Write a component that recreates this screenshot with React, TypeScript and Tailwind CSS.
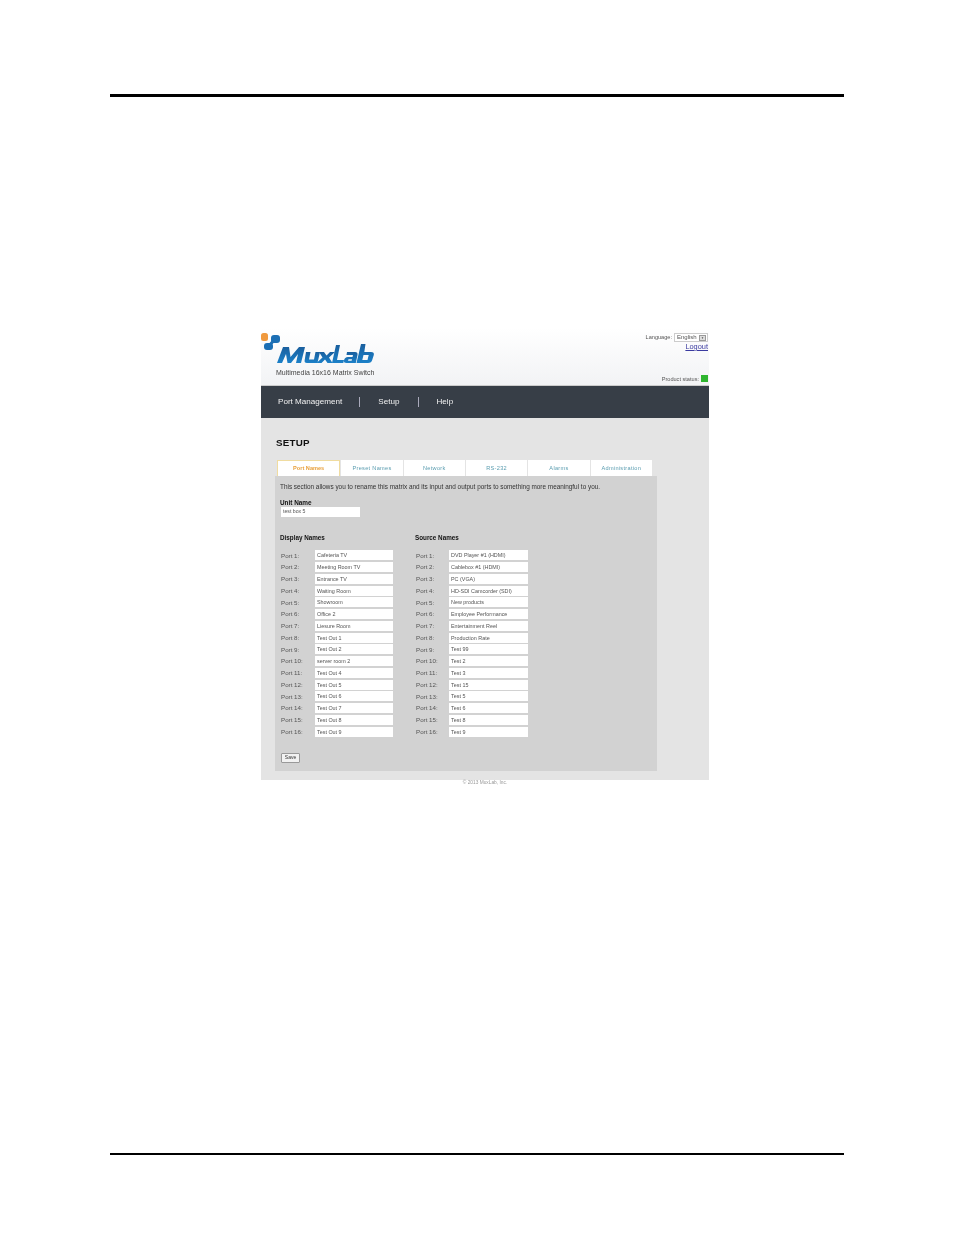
import React from 'react';

const tabs = ['Port Names', 'Preset Names', 'Network', 'RS-232', 'Alarms', 'Administration'];

const displayNames = [
    'Cafeteria TV', 'Meeting Room TV', 'Entrance TV', 'Waiting Room',
    'Showroom', 'Office 2', 'Liesure Room', 'Test Out 1',
    'Test Out 2', 'server room 2', 'Test Out 4', 'Test Out 5',
    'Test Out 6', 'Test Out 7', 'Test Out 8', 'Test Out 9',
];

const sourceNames = [
    'DVD Player #1 (HDMI)', 'Cablebox #1 (HDMI)', 'PC (VGA)', 'HD-SDI Camcorder (SDI)',
    'New products', 'Employee Performance', 'Entertainment Reel', 'Production Rate',
    'Test 99', 'Test 2', 'Test 3', 'Test 15',
    'Test 5', 'Test 6', 'Test 8', 'Test 9',
];

const Logo = () => (
    <svg width="116" height="36" viewBox="0 0 116 36" className="block">
        <defs>
            <linearGradient id="mux" x1="0" y1="0" x2="0" y2="1">
                <stop offset="0" stopColor="#1a5f9e" />
                <stop offset="1" stopColor="#1b80c8" />
            </linearGradient>
        </defs>
        <rect x="0" y="0" width="7" height="8" rx="2.5" fill="#f09a3e" />
        <rect x="3" y="10" width="9" height="7" rx="3" fill="#1c6fb4" />
        <rect x="10" y="2" width="9" height="8" rx="3" fill="#1c6fb4" />
        <path d="M8 13 L14 6" stroke="#1c6fb4" strokeWidth="3" />
        <g fill="url(#mux)">
            <path d="M16 30 L22 14 L28 14 L29.5 24 L38 14 L44 14 L40 30 L35 30 L37 21 L30 30 L26.5 30 L25 21 L21 30 Z" />
            <path d="M45 19 L49.5 19 L48 26.5 L53 26.5 L54.5 19 L59 19 L56.5 30 L46 30 Q43 30 43.7 27 Z" />
            <path d="M58 19 L63 19 L65.5 22.5 L69 19 L74 19 L68 24.5 L71.5 30 L66.5 30 L64 26.5 L60.5 30 L55.5 30 L61.5 24.5 Z" />
            <path d="M75 12 L79 12 L76 27 L83 27 L82.3 30 L71 30 Z" />
            <path fillRule="evenodd" d="M86 19 L94 19 Q97 19 96.5 22 L94.8 30 L85.5 30 Q82.5 30 83 27.5 Q83.6 24 87 24 L91.5 24 L92 22 L85.5 22 Z M87.5 26.3 L87 27.8 L90.6 27.8 L91 26.3 Z" />
            <path fillRule="evenodd" d="M100 11 L104.5 11 L103.3 19 L110 19 Q113.5 19 112.8 22 L111.2 27 Q110.5 30 107 30 L95.5 30 Z M102.5 22 L101.3 27 L106.5 27 L107.7 22 Z" />
        </g>
    </svg>
);

const PortRow = ({ label, value, labelWidth, inputWidth }: { label: string; value: string; labelWidth: string; inputWidth: string }) => (
    <div className="flex h-[11.75px] items-center">
        <span className={`${labelWidth} text-[6.2px] text-[#555]`}>{label}</span>
        <span className={`${inputWidth} flex h-[10px] items-center bg-white pl-[2px] text-[5.4px] text-[#555]`}>
            {value}
        </span>
    </div>
);

export default function App() {
    return (
        <div className="flex h-[1235px] w-[954px] flex-col bg-white pt-[94px] font-['Liberation_Sans',Arial,sans-serif]">
            <div className="mx-[110px] h-[3px] bg-black" />

            <div className="ml-[261px] mt-[231px] w-[448px] blur-[0.25px]">
                <div className="relative h-[57px] bg-gradient-to-b from-white to-[#f2f3f5] pt-[5px]">
                    <Logo />
                    <p className="ml-[15px] mt-[-1px] text-[7px] leading-[9px] text-[#444]">
                        Multimedia 16x16 Matrix Switch
                    </p>
                    <div className="absolute right-[1px] top-[5px] flex flex-col items-end">
                        <div className="flex items-center gap-[2px] text-[5.6px] text-[#555]">
                            <span>Language:</span>
                            <span className="flex h-[9px] w-[34px] items-center justify-between border border-[#ccc] bg-white pl-[2px] text-[6px] text-[#555]">
                                English
                                <span className="mr-[1px] h-[6px] w-[7px] border border-[#999] bg-[#ddd] text-center text-[3px] leading-[4px]">▼</span>
                            </span>
                        </div>
                        <a className="text-[7.4px] leading-[9px] text-[#3a3aa0] underline">Logout</a>
                    </div>
                    <div className="absolute bottom-[2px] right-[1px] flex items-center gap-[2px] text-[5.6px] text-[#555]">
                        <span>Product status:</span>
                        <span className="h-[7px] w-[7px] bg-[#2fb52f]" />
                    </div>
                </div>

                <div className="flex h-[33px] items-center border-t border-[#ccc] bg-[#373e47] pl-[17px] text-[8.1px] text-[#f2f2f2]">
                    <span>Port Management</span>
                    <span className="ml-[17px] mr-[18px] h-[10px] w-px bg-[#aab]" />
                    <span>Setup</span>
                    <span className="mx-[18px] h-[10px] w-px bg-[#aab]" />
                    <span>Help</span>
                </div>

                <div className="h-[362px] bg-[#e4e4e4] pt-[19px]">
                    <h1 className="ml-[15px] text-[9.8px] font-bold leading-[11px] tracking-[0.2px] text-[#111]">SETUP</h1>

                    <div className="ml-[16px] mt-[12px] flex h-[16px] w-[375px]">
                        {tabs.map((tab, i) => (
                            <div
                                key={tab}
                                className={
                                    i === 0
                                        ? 'flex flex-1 items-center justify-center border border-b-0 border-[#f0dca0] bg-white text-[5.6px] font-bold text-[#e8a03c]'
                                        : 'flex flex-1 items-center justify-center border-l border-[#e4e4e4] bg-white text-[5.6px] tracking-[0.3px] text-[#5b9db0]'
                                }
                            >
                                {tab}
                            </div>
                        ))}
                    </div>

                    <div className="ml-[14px] h-[295px] w-[382px] bg-[#d2d2d2] pl-[5px] pt-[7px]">
                        <p className="text-[6.4px] leading-[8px] text-[#333]">
                            This section allows you to rename this matrix and its input and output ports to something more meaningful to you.
                        </p>
                        <p className="mt-[7.5px] text-[6.4px] font-bold leading-[7px] text-[#111]">Unit Name</p>
                        <div className="ml-px mt-[1.5px] flex h-[10px] w-[79px] items-center bg-white pl-[2px] text-[5.2px] text-[#555]">
                            test box 5
                        </div>

                        <div className="mt-[16.5px] flex">
                            <div className="w-[135px]">
                                <p className="text-[6.3px] font-bold leading-[7px] text-[#111]">Display Names</p>
                                <div className="ml-px mt-[9px]">
                                    {displayNames.map((name, i) => (
                                        <PortRow key={i} label={`Port ${i + 1}:`} value={name} labelWidth="w-[34px]" inputWidth="w-[78px]" />
                                    ))}
                                </div>
                            </div>
                            <div>
                                <p className="text-[6.3px] font-bold leading-[7px] text-[#111]">Source Names</p>
                                <div className="ml-px mt-[9px]">
                                    {sourceNames.map((name, i) => (
                                        <PortRow key={i} label={`Port ${i + 1}:`} value={name} labelWidth="w-[33px]" inputWidth="w-[79px]" />
                                    ))}
                                </div>
                            </div>
                        </div>

                        <button className="ml-px mt-[15px] flex h-[10px] w-[19px] items-center justify-center rounded-[1px] border border-[#999] bg-[#f2f2f2] text-[5px] text-[#333]">
                            Save
                        </button>
                    </div>
                </div>

                <p className="text-center text-[4.8px] leading-[6px] text-[#999]">© 2013 MuxLab, Inc.</p>
            </div>

            <div className="mx-[110px] mt-[367px] h-[2px] bg-black" />
        </div>
    );
}
